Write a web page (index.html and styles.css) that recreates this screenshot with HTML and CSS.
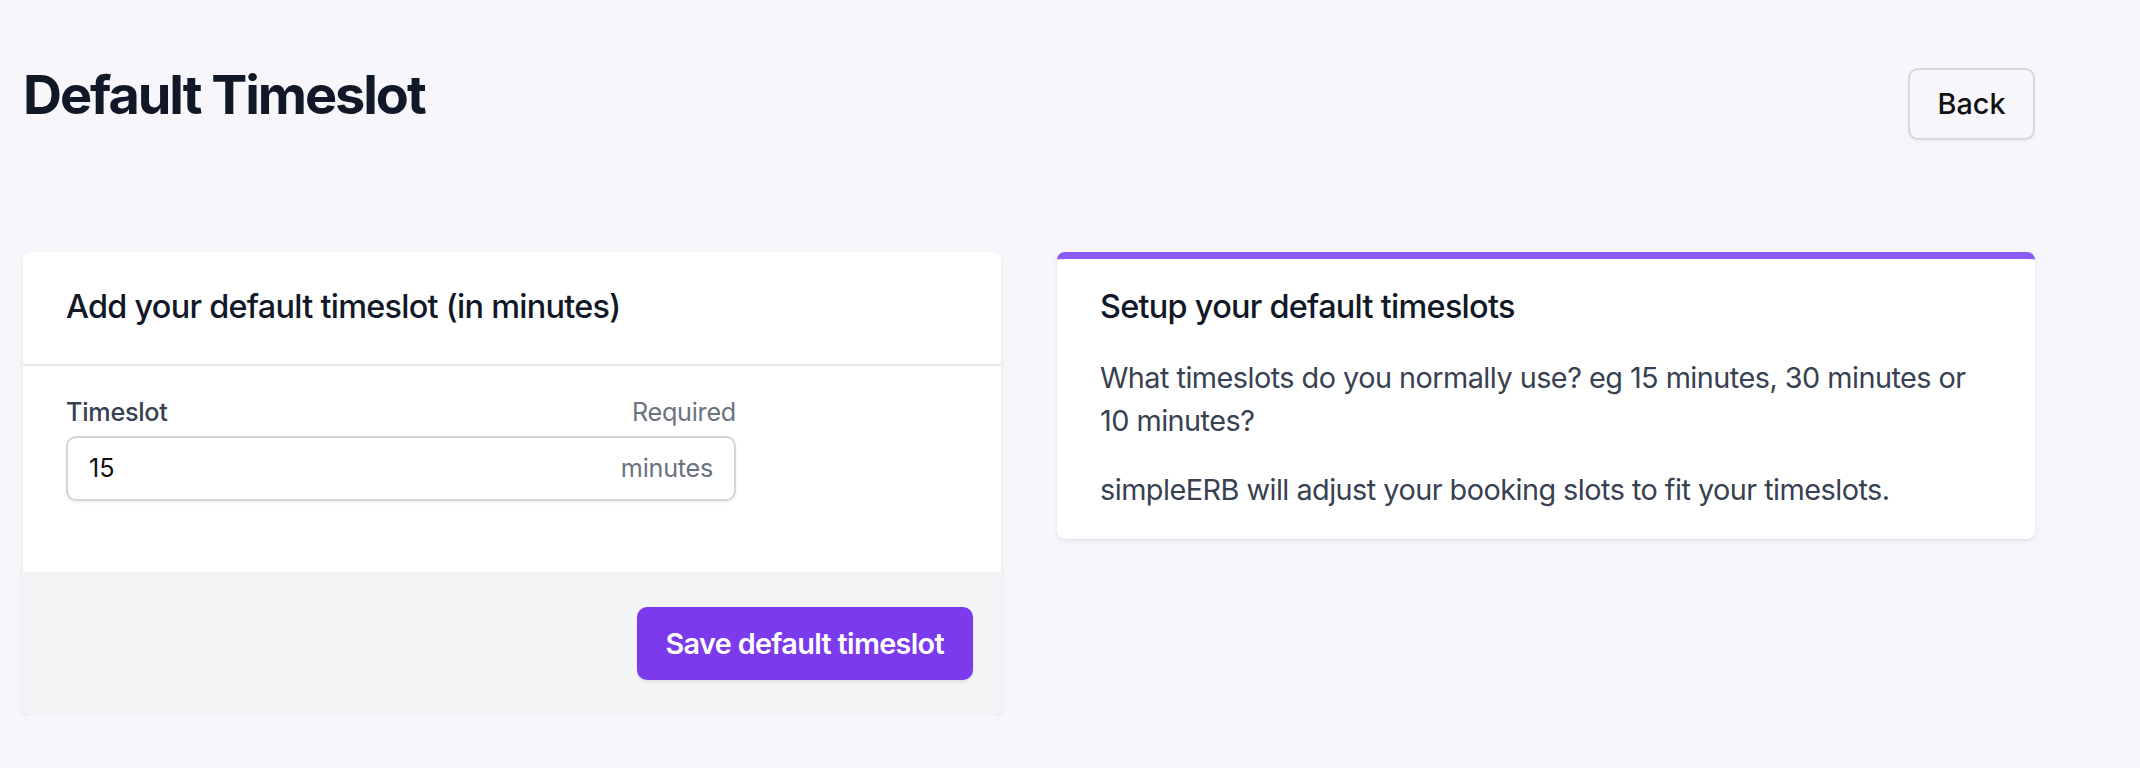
FILE: index.html
```html
<!DOCTYPE html>
<html lang="en">
<head>
<meta charset="utf-8">
<title>Default Timeslot</title>
<link rel="stylesheet" href="styles.css">
</head>
<body>
<main class="page">
  <header class="page-head">
    <h1 class="page-title">Default Timeslot</h1>
    <button class="btn-back" type="button">Back</button>
  </header>
  <div class="cards">
    <section class="card form-card">
      <div class="card-head">
        <h2 class="card-title">Add your default timeslot (in minutes)</h2>
      </div>
      <div class="card-body">
        <div class="field">
          <div class="field-top">
            <label class="field-label" for="ts">Timeslot</label>
            <span class="field-hint">Required</span>
          </div>
          <div class="input-wrap">
            <input id="ts" class="input" type="text" value="15">
            <span class="input-unit">minutes</span>
          </div>
        </div>
      </div>
      <div class="card-foot">
        <button class="btn-primary" type="button">Save default timeslot</button>
      </div>
    </section>
    <section class="card info-card">
      <h2 class="card-title">Setup your default timeslots</h2>
      <p class="info-text first">What timeslots do you normally use? eg 15 minutes, 30 minutes or 10 minutes?</p>
      <p class="info-text second">simpleERB will adjust your booking slots to fit your timeslots.</p>
    </section>
  </div>
</main>
</body>
</html>
```
FILE: styles.css
```css
* { box-sizing: border-box; }
html, body {
  margin: 0;
  padding: 0;
  background: #f7f7fb;
  font-family: Inter, "Noto Sans", "Liberation Sans", sans-serif;
  color: #111827;
}
.page {
  width: 2035px;
  padding-left: 23px;
}
.page-head {
  display: flex;
  justify-content: space-between;
  align-items: baseline;
  padding-top: 62px;
}
.page-title {
  margin: 0;
  font-size: 54px;
  line-height: 65px;
  font-weight: 700;
  letter-spacing: -0.038em;
  color: #111827;
}
.btn-back {
  font-family: inherit;
  font-size: 28.8px;
  line-height: 43.2px;
  font-weight: 500;
  color: #111111;
  background: transparent;
  border: 2px solid #d6d7dc;
  border-radius: 10px;
  padding: 12.4px 27.5px;
  box-shadow: 0 2px 3px rgba(0,0,0,0.04);
}
.cards {
  margin-top: 112.5px;
  display: grid;
  grid-template-columns: 1fr 1fr;
  gap: 56px;
  align-items: start;
}
.card {
  background: #ffffff;
  border-radius: 8px;
  box-shadow: 0 2px 5px rgba(0,0,0,0.08), 0 2px 3px -2px rgba(0,0,0,0.08);
  overflow: hidden;
}
.card-title {
  margin: 0;
  font-size: 32.4px;
  line-height: 50.4px;
  font-weight: 500;
  letter-spacing: -0.022em;
  color: #111827;
}
.card-head {
  padding: 30px 43px 31px;
  border-bottom: 2px solid #e5e7eb;
}
.card-body {
  padding: 28px 43px 71px;
}
.field {
  width: 670px;
}
.field-top {
  display: flex;
  justify-content: space-between;
  align-items: baseline;
  font-size: 25.2px;
  line-height: 36px;
  letter-spacing: -0.01em;
}
.field-label {
  font-weight: 500;
  color: #374151;
}
.field-hint {
  color: #6b7280;
}
.input-wrap {
  margin-top: 6px;
  height: 65px;
  display: flex;
  align-items: center;
  border: 2px solid #d1d5db;
  border-radius: 10px;
  padding: 0 21px;
  box-shadow: 0 2px 3px rgba(0,0,0,0.06);
  background: #fff;
}
.input {
  flex: 1;
  min-width: 0;
  border: 0;
  outline: none;
  padding: 0;
  font-family: inherit;
  font-size: 25.2px;
  color: #111111;
  background: transparent;
}
.input-unit {
  font-size: 25.2px;
  letter-spacing: -0.01em;
  color: #6b7280;
}
.card-foot {
  background: #f3f4f6;
  padding: 35px 28px 36px;
  display: flex;
  justify-content: flex-end;
}
.btn-primary {
  font-family: inherit;
  font-size: 28.8px;
  line-height: 43.2px;
  font-weight: 600;
  letter-spacing: -0.023em;
  color: #ffffff;
  background: #7c3aed;
  border: 0;
  border-radius: 10px;
  padding: 15px 29px;
  box-shadow: 0 2px 3px rgba(0,0,0,0.08);
}
.info-card {
  border-top: 7px solid #8b5cf6;
  padding: 23px 43px 28px;
}
.info-text {
  margin: 0;
  font-size: 28.8px;
  line-height: 43.2px;
  letter-spacing: -0.018em;
  color: #374151;
}
.info-text.first { margin-top: 23px; }
.info-text.second { margin-top: 26px; }
```
